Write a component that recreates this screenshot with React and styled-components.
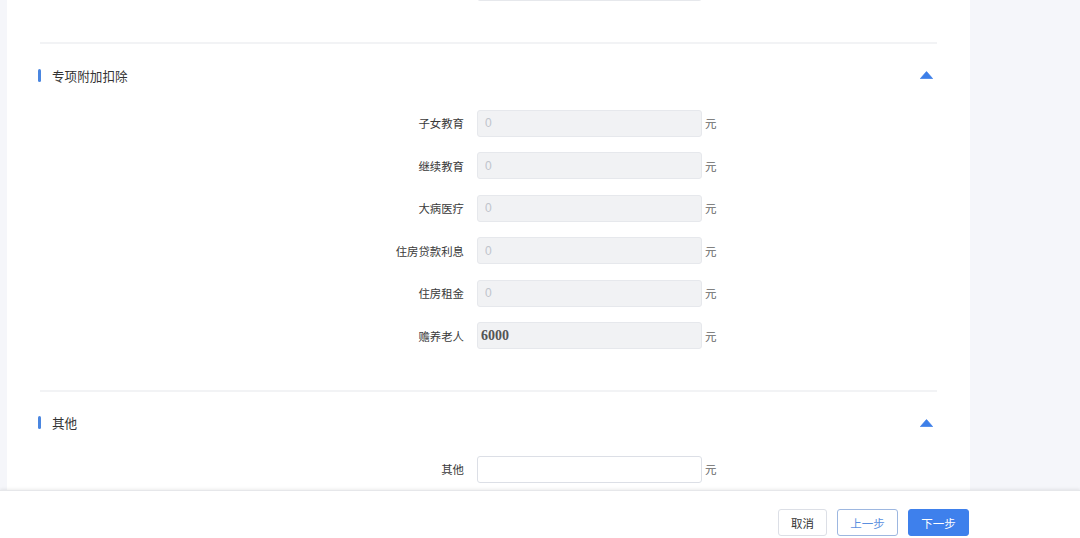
import React from 'react';
import styled, { createGlobalStyle } from 'styled-components';

const GlobalStyle = createGlobalStyle`
  html, body {
    margin: 0;
    padding: 0;
    height: 100%;
    overflow: hidden;
    background: #f5f6fa;
    font-family: "Noto Sans CJK SC", "Noto Sans", sans-serif;
  }
  #root { height: 100%; }
`;

const deductions = [
  { label: '子女教育', value: '0' },
  { label: '继续教育', value: '0' },
  { label: '大病医疗', value: '0' },
  { label: '住房贷款利息', value: '0' },
  { label: '住房租金', value: '0' },
  { label: '赡养老人', value: '6000', filled: true },
];

export default function App() {
  return (
    <>
      <GlobalStyle />
      <Page>
        <Main>
          <Card>
            <Section>
              <Row>
                <Label />
                <Field disabled value="" readOnly />
              </Row>
            </Section>
            <Divider />
            <Section>
              <SectionHead>
                <Title>专项附加扣除</Title>
                <Caret />
              </SectionHead>
              <Rows>
                {deductions.map((d) => (
                  <Row key={d.label}>
                    <Label>{d.label}</Label>
                    <Field disabled readOnly value={d.value} filled={d.filled} />
                    <Unit>元</Unit>
                  </Row>
                ))}
              </Rows>
            </Section>
            <Divider />
            <Section>
              <SectionHead>
                <Title>其他</Title>
                <Caret />
              </SectionHead>
              <Rows last>
                <Row>
                  <Label>其他</Label>
                  <Field editable defaultValue="" />
                  <Unit>元</Unit>
                </Row>
              </Rows>
            </Section>
          </Card>
        </Main>
        <Footer>
          <Button w={49}>取消</Button>
          <Button w={61} variant="outline">上一步</Button>
          <Button w={61} variant="primary">下一步</Button>
        </Footer>
      </Page>
    </>
  );
}

function Caret() {
  return (
    <CaretIcon width="13" height="8" viewBox="0 0 13 8">
      <path d="M6.5 0.6 L12.6 7.6 L0.4 7.6 Z" fill="#3d7fe8" strokeLinejoin="round" stroke="#3d7fe8" strokeWidth="0.8" />
    </CaretIcon>
  );
}

const Page = styled.div`
  height: 100%;
  display: flex;
  flex-direction: column;
`;

const Main = styled.div`
  flex: 1;
  min-height: 0;
  overflow: hidden;
  padding-left: 7px;
  display: flex;
`;

const Card = styled.div`
  width: 963px;
  background: #fff;
  padding: 0 33px;
  box-sizing: border-box;
  margin-top: -26px;
`;

const Section = styled.div`
  padding-bottom: 41px;
`;

const Divider = styled.div`
  height: 2px;
  background: #f2f3f5;
`;

const SectionHead = styled.div`
  display: flex;
  align-items: center;
  justify-content: space-between;
  margin: 21px 4px 0 -2px;
  height: 20px;
`;

const Title = styled.div`
  display: flex;
  align-items: center;
  gap: 11px;
  font-size: 12.6px;
  color: #333;
  &::before {
    content: '';
    width: 3px;
    height: 13px;
    border-radius: 2px;
    background: #4a86e0;
  }
`;

const CaretIcon = styled.svg`
  display: block;
`;

const Rows = styled.div`
  display: flex;
  flex-direction: column;
  gap: 15.6px;
  margin-top: ${(p) => (p.last ? '23px' : '24.5px')};
  margin-bottom: -0.5px;
`;

const Row = styled.div`
  display: flex;
  align-items: center;
  height: 27px;
`;

const Label = styled.div`
  width: 424px;
  margin-right: 13px;
  text-align: right;
  font-size: 11.4px;
  color: #3a3a3a;
`;

const Field = styled.input`
  width: 225px;
  height: 27px;
  box-sizing: border-box;
  border: 1px solid ${(p) => (p.editable ? '#dcdfe6' : '#e6e8ec')};
  border-radius: 3px;
  background: ${(p) => (p.editable ? '#fff' : '#f1f2f4')};
  padding: 0 ${(p) => (p.filled ? '3px' : '7px')};
  outline: none;
  font-family: ${(p) => (p.filled ? '"Liberation Serif", serif' : '"Liberation Sans", sans-serif')};
  font-size: ${(p) => (p.filled ? '14px' : '12px')};
  font-weight: ${(p) => (p.filled ? 700 : 400)};
  color: ${(p) => (p.filled ? '#555' : '#c0c4cc')};
  -webkit-text-fill-color: ${(p) => (p.filled ? '#555' : '#c0c4cc')};
  opacity: 1;
`;

const Unit = styled.span`
  margin-left: 3px;
  font-size: 11.5px;
  color: #666;
`;

const Footer = styled.div`
  height: 48px;
  flex-shrink: 0;
  background: #fff;
  border-top: 1px solid #e6e7ea;
  box-shadow: 0 -1px 3px rgba(0, 0, 0, 0.08);
  box-sizing: border-box;
  display: flex;
  justify-content: flex-end;
  align-items: flex-start;
  gap: 10px;
  padding: 18px 111px 0 0;
  position: relative;
`;

const Button = styled.button`
  width: ${(p) => p.w}px;
  height: 27px;
  padding: 0;
  border-radius: 3px;
  font-family: "Noto Sans CJK SC", sans-serif;
  font-size: 11.5px;
  cursor: pointer;
  border: 1px solid
    ${(p) => (p.variant === 'primary' ? '#3e80ec' : p.variant === 'outline' ? '#9db7e0' : '#dcdfe6')};
  background: ${(p) => (p.variant === 'primary' ? '#3e80ec' : '#fff')};
  color: ${(p) => (p.variant === 'primary' ? '#fff' : p.variant === 'outline' ? '#5b8fe0' : '#333')};
`;
